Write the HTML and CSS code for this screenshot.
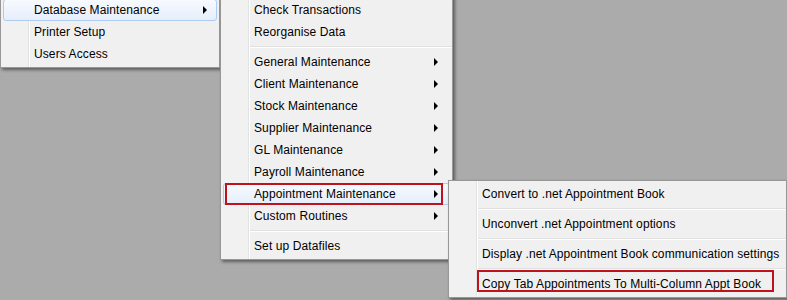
FILE: index.html
```html
<!DOCTYPE html>
<html lang="en">
<head>
    <meta charset="UTF-8">
    <meta name="viewport" content="width=device-width, initial-scale=1.0">
    <title>Database Maintenance Menu</title>
    <link rel="stylesheet" href="styles.css">
</head>
<body>
    <div class="desktop">
        <div class="menu menuMain">
            <div class="item hot"><span class="label">Database Maintenance</span><span class="arrow"></span></div>
            <div class="item"><span class="label">Printer Setup</span></div>
            <div class="item"><span class="label">Users Access</span></div>
        </div>

        <div class="menu menuDb">
            <div class="item"><span class="label">Check Transactions</span></div>
            <div class="item"><span class="label">Reorganise Data</span></div>
            <div class="sep"></div>
            <div class="item"><span class="label">General Maintenance</span><span class="arrow"></span></div>
            <div class="item"><span class="label">Client Maintenance</span><span class="arrow"></span></div>
            <div class="item"><span class="label">Stock Maintenance</span><span class="arrow"></span></div>
            <div class="item"><span class="label">Supplier Maintenance</span><span class="arrow"></span></div>
            <div class="item"><span class="label">GL Maintenance</span><span class="arrow"></span></div>
            <div class="item"><span class="label">Payroll Maintenance</span><span class="arrow"></span></div>
            <div class="item hot marked"><span class="label">Appointment Maintenance</span><span class="arrow"></span><span class="callout calloutAppt"></span></div>
            <div class="item"><span class="label">Custom Routines</span><span class="arrow"></span></div>
            <div class="sep"></div>
            <div class="item"><span class="label">Set up Datafiles</span></div>
        </div>

        <div class="menu menuAppt">
            <div class="item"><span class="label">Convert to .net Appointment Book</span></div>
            <div class="sep"></div>
            <div class="item"><span class="label">Unconvert .net Appointment options</span></div>
            <div class="sep"></div>
            <div class="item"><span class="label">Display .net Appointment Book communication settings</span></div>
            <div class="sep"></div>
            <div class="item marked"><span class="label">Copy Tab Appointments To Multi-Column Appt Book</span><span class="callout calloutCopy"></span></div>
        </div>
    </div>
</body>
</html>
```

FILE: styles.css
```css
body{
    margin: 0;
    background: #ababab;
    font-family: "Liberation Sans", Arial, sans-serif;
    font-size: 12px;
    color: #000;
}
.desktop{
    position: relative;
    width: 787px;
    height: 300px;
    overflow: hidden;
}

/* popup menus */
.menu{
    position: absolute;
    box-sizing: border-box;
    padding: 2px 0;
    border: 1px solid #979797;
    background: linear-gradient(to right, #f1f1f1 27px, #e2e3e3 27px 28px, #fff 28px 29px, #f0f0f0 29px);
    box-shadow: 2px 2px 3px rgba(0, 0, 0, 0.45);
}
.menuMain{
    left: 0;
    top: -4px;
    width: 220px;
}
.menuDb{
    left: 220px;
    top: -4px;
    width: 233px;
}
.menuAppt{
    left: 448px;
    top: 180px;
    width: 339px;
}

.item{
    display: flex;
    align-items: center;
    box-sizing: border-box;
    height: 22px;
    margin: 0 2px;
    padding: 0 9px 0 30px;
    border: 1px solid transparent;
    border-radius: 3px;
    white-space: nowrap;
    letter-spacing: 0.1px;
}
.item.hot{
    border-color: #aeccef;
    background: linear-gradient(#f7faff, #e5eefb);
}
.label{
    flex: 1;
}
.arrow{
    width: 0;
    height: 0;
    border-left: 4px solid #000;
    border-top: 4px solid transparent;
    border-bottom: 4px solid transparent;
}
.menuDb .item{
    padding-right: 11px;
}

.sep{
    height: 0;
    margin: 3px 0 3px 29px;
    border-top: 1px solid #e0e0e0;
    border-bottom: 1px solid #fff;
}

/* red annotation boxes */
.marked{
    position: relative;
}
.callout{
    position: absolute;
    box-sizing: border-box;
    border: 2px solid #c0121b;
}
.calloutAppt{
    left: 1px;
    right: 6px;
    top: -1px;
    bottom: -1px;
}
.calloutCopy{
    left: 25px;
    top: -4px;
    width: 297px;
    height: 22px;
}
```
